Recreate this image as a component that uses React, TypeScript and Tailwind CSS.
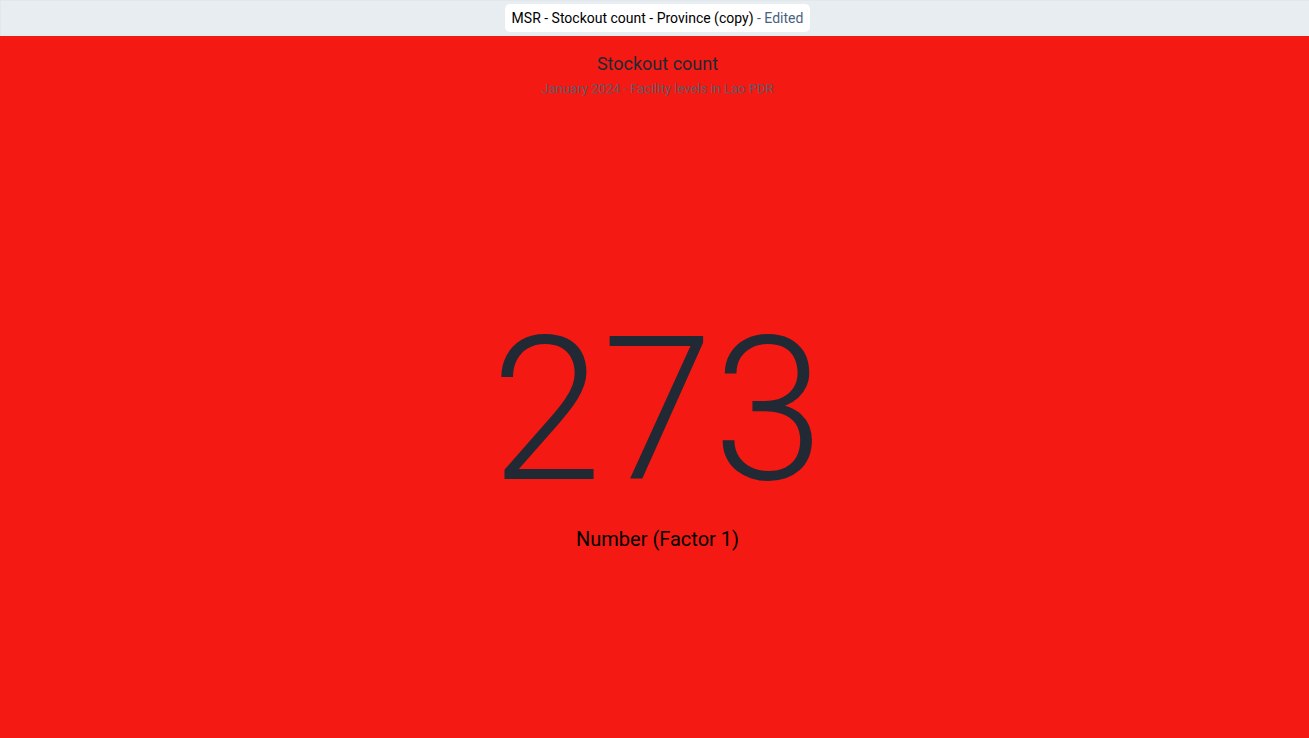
export default function App() {
  return (
    <div className="flex min-h-screen flex-col bg-[#f41912] font-['Roboto',sans-serif]">
      <header className="flex h-9 items-center justify-center bg-[#e8edf2] pl-1.5 shadow-[inset_1px_1px_0_#e2e7ec]">
        <h1 className="rounded-[5px] bg-white px-[7px] py-1 text-sm leading-5 text-black">
          MSR - Stockout count - Province (copy) <span className="text-[#4a5f80]">- Edited</span>
        </h1>
      </header>
      <main className="flex grow flex-col items-center pt-4 pl-1.5 text-center">
        <h2 className="text-lg leading-6 text-[#212934]">Stockout count</h2>
        <p className="mt-1 text-[13px] leading-[18px] text-[#5c5c66]">January 2024 - Facility levels in Lao PDR</p>
        <p className="mt-[193px] text-[200px] leading-[240px] font-light text-[#212934]">273</p>
        <p className="-mt-1 text-xl leading-6 text-black">Number (Factor 1)</p>
      </main>
    </div>
  );
}
